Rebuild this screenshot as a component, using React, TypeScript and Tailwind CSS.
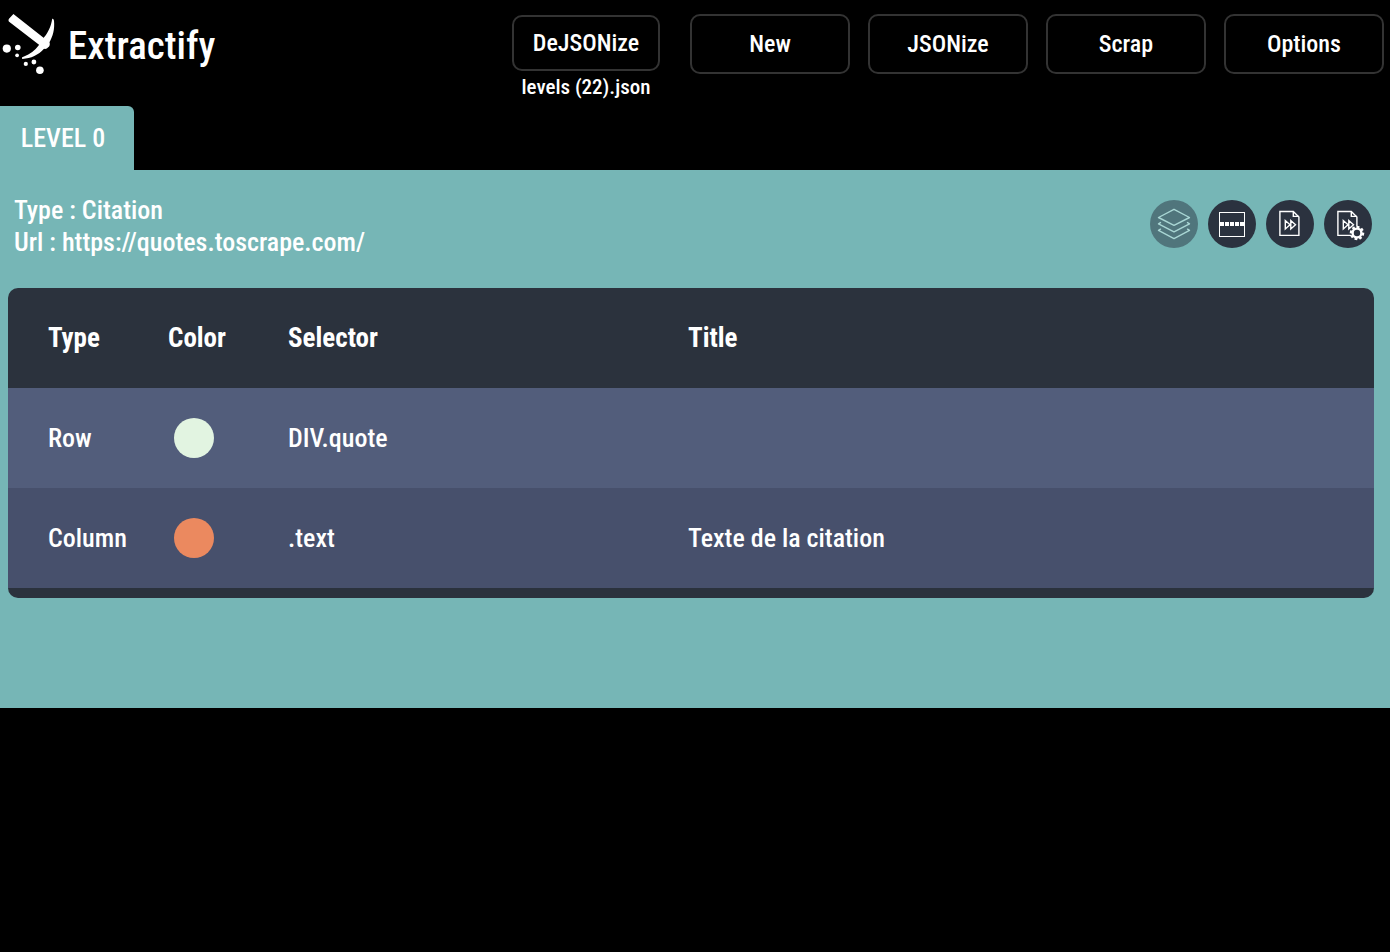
import type { ReactNode } from "react";

const NAV_ITEMS = ["New", "JSONize", "Scrap", "Options"];

const ROWS = [
  { type: "Row", dot: "bg-[#e2f4e1]", color: "Light green", selector: "DIV.quote", title: "" },
  { type: "Column", dot: "bg-[#eb895f]", color: "Orange", selector: ".text", title: "Texte de la citation" },
];

function Logo() {
  return (
    <svg className="mt-3 h-16 w-[60px] shrink-0" viewBox="0 12 60 64" fill="#fff" aria-hidden="true">
      <path d="M13.4 14 L49.6 42.4 Q50.4 45.6 48.2 47.2 Q46.6 49.4 44.2 48.8 L8.8 21.6 Q8 20 9 18.8 Z" />
      <path d="M52.2 18.8 Q53.6 18.4 54 20.8 C54.8 29 53 36.4 49 43 L44 48.8 C38.4 55 31 58.6 22.4 58.9 Q20.8 57.6 24 56.6 C30 54 35 50.6 38.6 45.6 L42.5 39.2 C47.5 34 51 27 52.2 18.8 Z" />
      <circle cx="6.8" cy="48.6" r="4.1" />
      <circle cx="17.8" cy="47.5" r="2.8" />
      <circle cx="17.1" cy="55.3" r="1.9" />
      <circle cx="25.8" cy="63.9" r="2.1" />
      <circle cx="33.9" cy="62" r="2.4" />
      <circle cx="39.9" cy="70.2" r="3.8" />
    </svg>
  );
}

function RoundButton({ label, disabled, children }: { label: string; disabled?: boolean; children: ReactNode }) {
  return (
    <button
      type="button"
      aria-label={label}
      disabled={disabled}
      className="size-12 rounded-full bg-[#2b323f] disabled:bg-[#50757c]"
    >
      <svg className="size-12" viewBox="0 0 48 48" fill="none" stroke="#fff" strokeWidth="1.4">
        {children}
      </svg>
    </button>
  );
}

function PageForward() {
  return (
    <>
      <path d="M13.9 11.5 H27.3 L32.9 17 V35.4 H13.9 Z" />
      <path d="M27.3 11.5 V16.4 H33" />
      <path d="M19.3 20.5 V29 L24 24.8 Z M24.8 20.5 V29 L29.5 24.8 Z" />
    </>
  );
}

const TEETH = [0, 45, 90, 135, 180, 225, 270, 315];

export default function App() {
  return (
    <div className="min-h-screen bg-black font-['Roboto_Condensed','Liberation_Sans_Narrow',sans-serif] text-[26px] leading-8 font-medium text-white">
      <header className="flex min-h-[106px] items-start justify-between pr-[6px]">
        <div className="flex gap-2">
          <Logo />
          <h1 className="mt-6 text-[39px] leading-[44px]">Extractify</h1>
        </div>
        <nav className="flex items-start gap-[18px] pt-[14px]" aria-label="Main">
          <div className="mr-3 flex flex-col items-center pt-px">
            <button type="button" className="h-14 w-[148px] rounded-[10px] border-2 border-[#333] text-[24px]">
              DeJSONize
            </button>
            <span className="text-[21px]">levels (22).json</span>
          </div>
          {NAV_ITEMS.map((item) => (
            <button key={item} type="button" className="h-[60px] w-40 rounded-[10px] border-2 border-[#333] text-[24px]">
              {item}
            </button>
          ))}
        </nav>
      </header>

      <div role="tablist" className="flex">
        <button type="button" role="tab" aria-selected="true" className="h-16 w-[134px] rounded-tr-md bg-[#76b6b6] pr-2">
          LEVEL 0
        </button>
      </div>

      <main className="bg-[#76b6b6] pt-6 pr-4 pb-[110px] pl-2">
        <div className="flex justify-between pr-[2px] pl-[6px]">
          <div>
            <p>Type : Citation</p>
            <p>Url : https://quotes.toscrape.com/</p>
          </div>
          <div className="flex gap-[10px] pt-[6px]">
            <RoundButton label="Levels" disabled>
              <g stroke="#a9d6d4" strokeLinejoin="round" strokeLinecap="round">
                <path d="M8.5 17.5 L24 9.3 L39.5 17.5 L24 25.3 Z" />
                <path d="M10.5 22.6 L8.5 23.8 L24 31.8 L39.5 23.8 L37.5 22.6" />
                <path d="M10.5 29.2 L8.5 30.4 L24 38.6 L39.5 30.4 L37.5 29.2" />
              </g>
            </RoundButton>
            <RoundButton label="Rows">
              <rect x="11.5" y="12.5" width="25" height="24" strokeWidth="1" />
              <path d="M12 24 H37" strokeWidth="4" strokeDasharray="4 1" />
            </RoundButton>
            <RoundButton label="Next page">
              <PageForward />
            </RoundButton>
            <RoundButton label="Next page settings">
              <PageForward />
              <circle cx="33" cy="33" r="6.5" fill="#2b323f" stroke="none" />
              <circle cx="33" cy="33" r="4.4" strokeWidth="2.4" />
              {TEETH.map((angle) => (
                <path key={angle} d="M33 28.5 V25.8" strokeWidth="2.8" transform={`rotate(${angle + 10} 33 33)`} />
              ))}
            </RoundButton>
          </div>
        </div>

        <div className="mt-[30px] overflow-hidden rounded-[10px] bg-[#2b323d] pb-[10px]">
          <table className="w-full table-fixed text-left">
            <thead className="text-[27px]">
              <tr className="h-[100px]">
                <th className="w-40 pl-10 font-bold">Type</th>
                <th className="w-[120px] font-bold">Color</th>
                <th className="w-[400px] font-bold">Selector</th>
                <th className="font-bold">Title</th>
              </tr>
            </thead>
            <tbody>
              {ROWS.map((row) => (
                <tr key={row.type} className="h-[100px] odd:bg-[#525d7b] even:bg-[#47506c]">
                  <td className="pl-10">{row.type}</td>
                  <td className="pl-[6px]">
                    <div role="img" aria-label={row.color} className={`size-10 rounded-full ${row.dot}`} />
                  </td>
                  <td>{row.selector}</td>
                  <td>{row.title}</td>
                </tr>
              ))}
            </tbody>
          </table>
        </div>
      </main>
    </div>
  );
}
